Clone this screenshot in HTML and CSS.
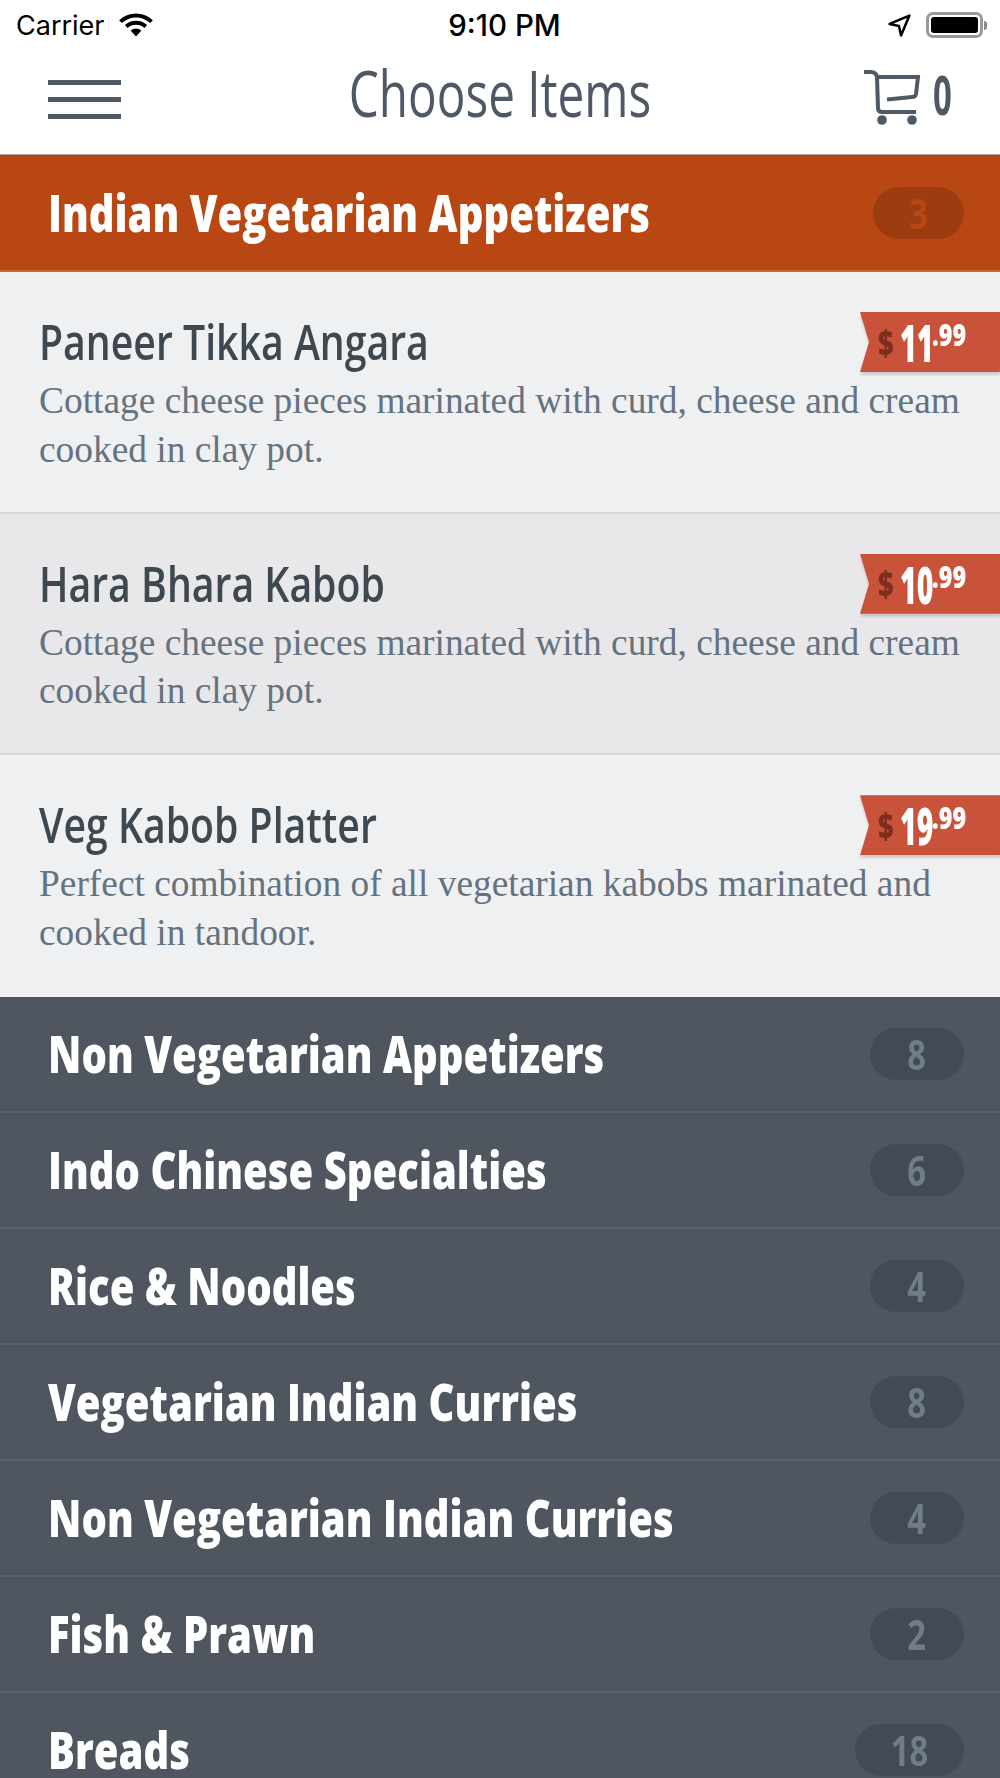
FILE: index.html
```html
<!DOCTYPE html>
<html lang="en">
<head>
  <meta charset="UTF-8">
  <title>Choose Items</title>
  <link rel="stylesheet" href="styles.css">
</head>
<body>
  <div class="status-bar">
    <div class="status-left">
      <span>Carrier</span>
      <svg class="wifi" width="36" height="26" viewBox="0 0 36 26">
        <path d="M18 24.5 L12.6 18.6 A8 8 0 0 1 23.4 18.6 Z" fill="#000"/>
        <path d="M2.5 9.6 A22.5 22.5 0 0 1 33.5 9.6" fill="none" stroke="#000" stroke-width="4"/>
        <path d="M8.2 14.6 A14.6 14.6 0 0 1 27.8 14.6" fill="none" stroke="#000" stroke-width="4"/>
      </svg>
    </div>
    <div class="status-time">9:10 PM</div>
    <div class="status-right">
      <svg width="25" height="25" viewBox="0 0 24 24">
        <path d="M2.5 10.5 L21.5 2.5 L13.5 21.5 L11.5 12.5 Z" fill="none" stroke="#000" stroke-width="2.4" stroke-linejoin="round"/>
      </svg>
      <div class="battery"><div class="battery-fill"></div></div>
      <div class="battery-tip"></div>
    </div>
  </div>

  <header class="top-bar">
    <div class="burger"><span></span><span></span><span></span></div>
    <h1>Choose Items</h1>
    <div class="cart">
      <svg width="56" height="56" viewBox="0 0 56 56">
        <path d="M0 2 H7 Q12 2 13 7 L14 38 Q14 42 18 42 H52" fill="none" stroke="#4e5965" stroke-width="4"/>
        <path d="M14 7 H54 L52 24 Q51.5 27 48 27 L23 29.500" fill="none" stroke="#4e5965" stroke-width="4"/>
        <circle cx="18" cy="50" r="4.800" fill="#4e5965"/>
        <circle cx="48" cy="50" r="4.800" fill="#4e5965"/>
      </svg>
      <span class="cart-count">0</span>
    </div>
  </header>

  <div class="cat cat-open">
    <span class="cat-name">Indian Vegetarian Appetizers</span>
    <span class="count"><span>3</span></span>
  </div>

  <div class="item">
    <h2>Paneer Tikka Angara</h2>
    <p>Cottage cheese pieces marinated with curd, cheese and cream cooked in clay pot.</p>
    <div class="price"><div class="price-tag"><span class="cur">$</span><span class="whole">11</span><span class="cents">.99</span></div></div>
  </div>
  <div class="item item-alt">
    <h2>Hara Bhara Kabob</h2>
    <p>Cottage cheese pieces marinated with curd, cheese and cream cooked in clay pot.</p>
    <div class="price"><div class="price-tag"><span class="cur">$</span><span class="whole">10</span><span class="cents">.99</span></div></div>
  </div>
  <div class="item item-last">
    <h2>Veg Kabob Platter</h2>
    <p>Perfect combination of all vegetarian kabobs marinated and cooked in tandoor.</p>
    <div class="price"><div class="price-tag"><span class="cur">$</span><span class="whole">19</span><span class="cents">.99</span></div></div>
  </div>

  <div class="cat"><span class="cat-name">Non Vegetarian Appetizers</span><span class="count"><span>8</span></span></div>
  <div class="cat"><span class="cat-name">Indo Chinese Specialties</span><span class="count"><span>6</span></span></div>
  <div class="cat"><span class="cat-name">Rice &amp; Noodles</span><span class="count"><span>4</span></span></div>
  <div class="cat"><span class="cat-name">Vegetarian Indian Curries</span><span class="count"><span>8</span></span></div>
  <div class="cat"><span class="cat-name">Non Vegetarian Indian Curries</span><span class="count"><span>4</span></span></div>
  <div class="cat"><span class="cat-name">Fish &amp; Prawn</span><span class="count"><span>2</span></span></div>
  <div class="cat"><span class="cat-name">Breads</span><span class="count"><span>18</span></span></div>
</body>
</html>
```

FILE: styles.css
```css
html, body {
  margin: 0;
  padding: 0;
}
body {
  width: 1000px;
  height: 1778px;
  overflow: hidden;
  background: #4f5660;
  font-family: "Open Sans", sans-serif;
}
.status-bar {
  height: 50px;
  background: #fff;
  display: flex;
  align-items: center;
  padding: 0 13px 0 16px;
  font-family: Inter, sans-serif;
  font-size: 27px;
  color: #000;
}
.status-left {
  flex: 1;
  display: flex;
  align-items: center;
  gap: 13px;
}
.status-time {
  font-weight: 500;
  font-size: 29.5px;
  margin-left: 6px;
}
.status-right {
  flex: 1;
  display: flex;
  align-items: center;
  justify-content: flex-end;
}
.battery {
  margin-left: 14px;
  width: 47px;
  height: 16px;
  border: 3px solid #999;
  border-radius: 7px;
  padding: 2px;
  background: #fff;
}
.battery-fill {
  height: 100%;
  background: #000;
  border-radius: 3px;
}
.battery-tip {
  width: 3px;
  height: 9px;
  margin-left: 1px;
  background: #888;
  border-radius: 0 3px 3px 0;
}
.top-bar {
  height: 104px;
  background: #fff;
  display: flex;
  align-items: center;
  justify-content: space-between;
  padding: 0 48px;
  border-bottom: 1px solid #b9a69a;
}
.burger {
  width: 110px;
  display: flex;
  flex-direction: column;
  gap: 12px;
  margin-top: -6px;
}
.burger span {
  width: 73px;
  height: 5px;
  background: #505a66;
}
.top-bar h1 {
  margin: -20px 0 0;
  font-weight: 400;
  font-size: 64px;
  color: #4e5965;
  transform: scaleX(.745);
}
.cart {
  width: 110px;
  display: flex;
  align-items: center;
  justify-content: flex-end;
  gap: 13px;
  color: #4e5965;
  margin-top: -8px;
}
.cart-count {
  width: 19px;
  margin-top: -6px;
  font-size: 53px;
  font-weight: 700;
  line-height: 56px;
  transform: scaleX(.62);
  transform-origin: left center;
}
.cat {
  height: 114px;
  display: flex;
  align-items: center;
  justify-content: space-between;
  padding: 0 36px 0 48px;
  background: #4f5660;
  border-bottom: 2px solid #5a616b;
}
.cat-name {
  margin-top: -3px;
  color: #fff;
  font-size: 52px;
  font-weight: 800;
  white-space: nowrap;
  transform: scaleX(.77);
  transform-origin: left center;
}
.count {
  box-sizing: border-box;
  min-width: 94px;
  height: 52px;
  padding: 0 31px;
  border-radius: 26px;
  background: #444a53;
  color: #6f7d8a;
  font-size: 41px;
  font-weight: 700;
  text-align: center;
  line-height: 52px;
}
.count span {
  display: inline-block;
  transform: scaleX(.8);
}
.cat-open {
  height: 115px;
  background: #b84713;
  border-bottom: 2px solid #c96a3e;
}
.cat-open .count {
  min-width: 91px;
  background: #9c3d11;
  color: #b84713;
}
.item {
  height: 241.67px;
  position: relative;
  padding: 36px 30px 0 39px;
  box-sizing: border-box;
  background: #eff0f2;
  border-bottom: 2px solid #d6d7d9;
}
.item-alt {
  background: #e8e8ea;
}
.item-last {
  border-bottom: 0;
}
.item h2 {
  margin: 0 0 3px;
  font-size: 49px;
  font-weight: 600;
  line-height: 66px;
  color: #3e4850;
  white-space: nowrap;
  transform: scaleX(.8);
  transform-origin: left center;
}
.item p {
  margin: 0;
  font-family: "Liberation Serif", serif;
  font-size: 37.4px;
  line-height: 48.5px;
  color: #65727f;
}
.price {
  position: absolute;
  top: 40px;
  right: 0;
  filter: drop-shadow(0 3px 1px rgba(0, 0, 0, .14));
}
.price-tag {
  width: 140px;
  height: 60px;
  box-sizing: border-box;
  padding-left: 18px;
  background: #c9533a;
  clip-path: polygon(0 0, 100% 0, 100% 100%, 0 100%, 9px 50%);
  color: #fff;
  display: flex;
  align-items: center;
  font-weight: 800;
}
.price span {
  display: block;
  transform-origin: left center;
}
.price .cur {
  width: 22px;
  color: #7f2e1b;
  font-size: 36px;
  transform: scaleX(.75);
}
.price .whole {
  width: 32px;
  font-size: 52px;
  line-height: 60px;
  transform: scaleX(.55);
}
.price .cents {
  margin-top: 3px;
  font-size: 30px;
  line-height: 40px;
  align-self: flex-start;
  transform: scaleX(.78);
}
```
